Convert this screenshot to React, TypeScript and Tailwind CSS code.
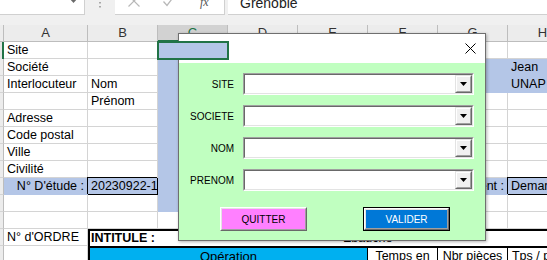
import React from "react";

const GR = "border-r border-b border-[#d4d4d4] bg-white";
const BL = "border-r border-b border-[#b4c6e7] bg-[#b4c6e7]";

function Cell({
  w = "w-[70px]",
  cls = GR,
  children,
}: {
  w?: string;
  cls?: string;
  children?: React.ReactNode;
}) {
  return (
    <div
      className={`${w} shrink-0 h-[17px] px-[3px] text-[12.5px] leading-[17px] whitespace-nowrap text-black ${cls}`}
    >
      {children}
    </div>
  );
}

function RH({ active = false }: { active?: boolean }) {
  return (
    <div
      className={
        active
          ? "w-[4px] shrink-0 h-[17px] bg-[#e6e6e6] border-r-2 border-r-[#217346]"
          : "w-[4px] shrink-0 h-[17px] bg-[#ececec] border-r border-r-[#bdbdbd] border-b border-b-[#d4d4d4]"
      }
    />
  );
}

function Row({ children }: { children: React.ReactNode }) {
  return <div className="flex h-[17px]">{children}</div>;
}

function SimpleRow({
  a,
  b,
  gh,
  h,
}: {
  a?: string;
  b?: string;
  gh?: boolean;
  h?: string;
}) {
  return (
    <Row>
      <RH />
      <Cell w="w-[84px]">{a}</Cell>
      <Cell>{b}</Cell>
      <Cell cls={BL} />
      <Cell />
      <Cell />
      <Cell />
      <Cell cls={gh ? BL : GR} />
      <Cell cls={gh ? BL : GR}>{h}</Cell>
    </Row>
  );
}

function Combo({ label }: { label: string }) {
  return (
    <div className="flex items-center h-[22px]">
      <div className="w-[56px] text-right text-[10px] text-black pr-[1px]">{label}</div>
      <div className="ml-[8px] w-[231px] h-[22px] border border-t-[#a0a0a0] border-l-[#a0a0a0] border-b-white border-r-white flex">
        <div className="flex-1 border border-t-[#696969] border-l-[#696969] border-b-[#e3e3e3] border-r-[#e3e3e3] bg-white flex justify-end">
          <div className="w-[17px] h-full border border-t-[#e3e3e3] border-l-[#e3e3e3] border-b-[#696969] border-r-[#696969] flex">
            <div className="flex-1 border border-t-white border-l-white border-b-[#a0a0a0] border-r-[#a0a0a0] bg-[#f0f0f0] flex items-center justify-center">
              <svg width="7" height="4" viewBox="0 0 7 4">
                <path d="M0 0H7L3.5 4Z" fill="#000" />
              </svg>
            </div>
          </div>
        </div>
      </div>
    </div>
  );
}

export default function App() {
  return (
    <div className="relative w-[547px] h-[260px] overflow-hidden bg-white font-['Liberation_Sans',Arial,sans-serif]">
      {/* formula bar */}
      <div className="h-[25px] bg-[#f0f0f0] flex items-start">
        <div className="w-[85px] shrink-0 h-[15px] bg-white border-r border-b border-[#d0d0d0] flex justify-end pr-[6px]">
          <svg width="9" height="5" viewBox="0 0 9 5" className="-mt-[2px]">
            <path d="M0 0H9L4.5 5Z" fill="#6a6a6a" />
          </svg>
        </div>
        <div className="w-[30px] shrink-0 h-[15px] flex justify-center">
          <svg width="2" height="10" viewBox="0 0 2 10">
            <rect x="0" y="2" width="2" height="1.5" fill="#a8a8a8" />
            <rect x="0" y="6" width="2" height="1.5" fill="#a8a8a8" />
          </svg>
        </div>
        <div className="w-[110px] shrink-0 h-[15px] bg-white border-r border-b border-[#d0d0d0] flex items-start overflow-hidden">
          <svg width="12" height="12" viewBox="0 0 12 12" className="ml-[13px] -mt-[5px]">
            <path d="M0.5 0.5L11.5 11.5M11.5 0.5L0.5 11.5" stroke="#b8b8b8" strokeWidth="1.2" />
          </svg>
          <svg width="12" height="12" viewBox="0 0 12 12" className="ml-[23px] -mt-[5px]">
            <path d="M0.5 6.5L4 10.5L11.5 0.5" stroke="#b8b8b8" strokeWidth="1.3" fill="none" />
          </svg>
          <span className="ml-[25px] -mt-[4px] text-[12px] leading-[12px] italic font-['Liberation_Serif',serif] text-[#555]">
            fx
          </span>
        </div>
        <div className="w-[3px] shrink-0" />
        <div className="flex-1 h-[15px] bg-white border-b border-[#d0d0d0] overflow-hidden pl-[12px]">
          <div className="-mt-[4px] text-[14px] leading-[14px] text-[#222]">Grenoble</div>
        </div>
      </div>

      {/* column headers */}
      <div className="flex h-[17px] bg-[#ececec] text-[13px] leading-[16px] text-[#333]">
        <div className="w-[4px] shrink-0 border-r border-b border-[#bdbdbd]" />
        <div className="w-[84px] shrink-0 text-center border-r border-b border-[#bdbdbd]">A</div>
        <div className="w-[70px] shrink-0 text-center border-r border-b border-[#bdbdbd]">B</div>
        <div className="w-[70px] shrink-0 text-center bg-[#d2d2d2] border-r border-r-[#bdbdbd] border-b-2 border-b-[#217346] text-[#217346]">C</div>
        <div className="w-[70px] shrink-0 text-center border-r border-b border-[#bdbdbd]">D</div>
        <div className="w-[70px] shrink-0 text-center border-r border-b border-[#bdbdbd]">E</div>
        <div className="w-[70px] shrink-0 text-center border-r border-b border-[#bdbdbd]">F</div>
        <div className="w-[70px] shrink-0 text-center border-r border-b border-[#bdbdbd]">G</div>
        <div className="w-[70px] shrink-0 text-center border-r border-b border-[#bdbdbd]">H</div>
      </div>

      {/* rows */}
      <Row>
        <RH active />
        <Cell w="w-[84px]">Site</Cell>
        <Cell />
        <Cell cls="relative z-10 bg-[#b4c6e7] shadow-[0_0_0_1px_#217346,inset_0_0_0_1px_#217346]" />
        <Cell />
        <Cell />
        <Cell />
        <Cell />
        <Cell />
      </Row>
      <SimpleRow a="Société" gh h="Jean" />
      <SimpleRow a="Interlocuteur" b="Nom" gh h="UNAP" />
      <SimpleRow b="Prénom" />
      <SimpleRow a="Adresse" />
      <SimpleRow a="Code postal" />
      <SimpleRow a="Ville" />
      <SimpleRow a="Civilité" />
      <Row>
        <RH />
        <Cell w="w-[84px]" cls={`${BL} text-right`}>N° D'étude :</Cell>
        <Cell cls="relative z-10 bg-[#b4c6e7] border-r border-b border-black shadow-[-1px_-1px_0_0_#000]">20230922-1</Cell>
        <Cell cls={BL} />
        <Cell />
        <Cell />
        <Cell />
        <Cell cls={`${BL} flex justify-end`}>Avancement :</Cell>
        <Cell cls="relative z-10 bg-[#b4c6e7] border-r border-b border-black shadow-[-1px_-1px_0_0_#000]">Demande</Cell>
      </Row>
      <SimpleRow />
      <Row>
        <RH />
        <Cell w="w-[84px]" />
        <Cell />
        <Cell />
        <Cell />
        <Cell />
        <Cell />
        <Cell />
        <Cell />
      </Row>
      <Row>
        <RH />
        <Cell w="w-[84px]">N° d'ORDRE</Cell>
        <div className="flex-1 h-[17px] flex border-t-2 border-l-2 border-black text-[12.5px] leading-[15px] whitespace-nowrap">
          <div className="w-[68px] shrink-0 pl-[1px] font-bold">INTITULE :</div>
          <div className="pl-[185px]">Ebauche</div>
        </div>
      </Row>
      <Row>
        <RH />
        <Cell w="w-[84px]" />
        <div className="w-[280px] shrink-0 h-[17px] bg-[#00b0f0] border-t-2 border-l-2 border-r border-black text-center text-[13px] leading-[17px]">
          Opération
        </div>
        <div className="w-[70px] shrink-0 h-[17px] border-t-2 border-r border-black text-center text-[12.5px] leading-[17px] whitespace-nowrap">
          Temps en
        </div>
        <div className="w-[70px] shrink-0 h-[17px] border-t-2 border-r border-black text-center text-[12.5px] leading-[17px] whitespace-nowrap">
          Nbr pièces
        </div>
        <div className="w-[70px] shrink-0 h-[17px] border-t-2 border-r border-black text-center text-[12.5px] leading-[17px] whitespace-nowrap">
          Tps / pièce
        </div>
      </Row>

      {/* dialog */}
      <div className="absolute left-[178px] top-[33px] w-[308px] h-[208px] bg-white border border-[#6f6f6f] shadow-[1px_1px_3px_rgba(0,0,0,0.3)] flex flex-col">
        <div className="h-[29px] shrink-0 flex items-center justify-between pl-[8px] pr-[9px]">
          <span className="font-['Noto_Sans',sans-serif] text-[11.5px] text-black">Saisie</span>
          <svg width="11" height="11" viewBox="0 0 11 11">
            <path d="M0.5 0.5L10.5 10.5M10.5 0.5L0.5 10.5" stroke="#000" strokeWidth="1" />
          </svg>
        </div>
        <div className="flex-1 bg-[#c0ffc0] pt-[10px] flex flex-col">
          <div className="flex flex-col gap-[10px]">
            <Combo label="SITE" />
            <Combo label="SOCIETE" />
            <Combo label="NOM" />
            <Combo label="PRENOM" />
          </div>
          <div className="flex mt-[16px] pl-[41px] gap-[56px]">
            <div className="w-[87px] h-[24px] border border-t-white border-l-white border-b-[#696969] border-r-[#696969] flex">
              <div className="flex-1 border border-t-[#e3e3e3] border-l-[#e3e3e3] border-b-[#a0a0a0] border-r-[#a0a0a0] bg-[#ff80ff] flex items-center justify-center text-[10px] text-black">
                QUITTER
              </div>
            </div>
            <div className="w-[87px] h-[24px] border border-black flex">
              <div className="flex-1 border border-t-white border-l-white border-b-[#696969] border-r-[#696969] flex">
                <div className="flex-1 border border-t-[#e3e3e3] border-l-[#e3e3e3] border-b-[#a0a0a0] border-r-[#a0a0a0] bg-[#0078d7] flex items-center justify-center text-[10px] text-white">
                  VALIDER
                </div>
              </div>
            </div>
          </div>
        </div>
      </div>
    </div>
  );
}
